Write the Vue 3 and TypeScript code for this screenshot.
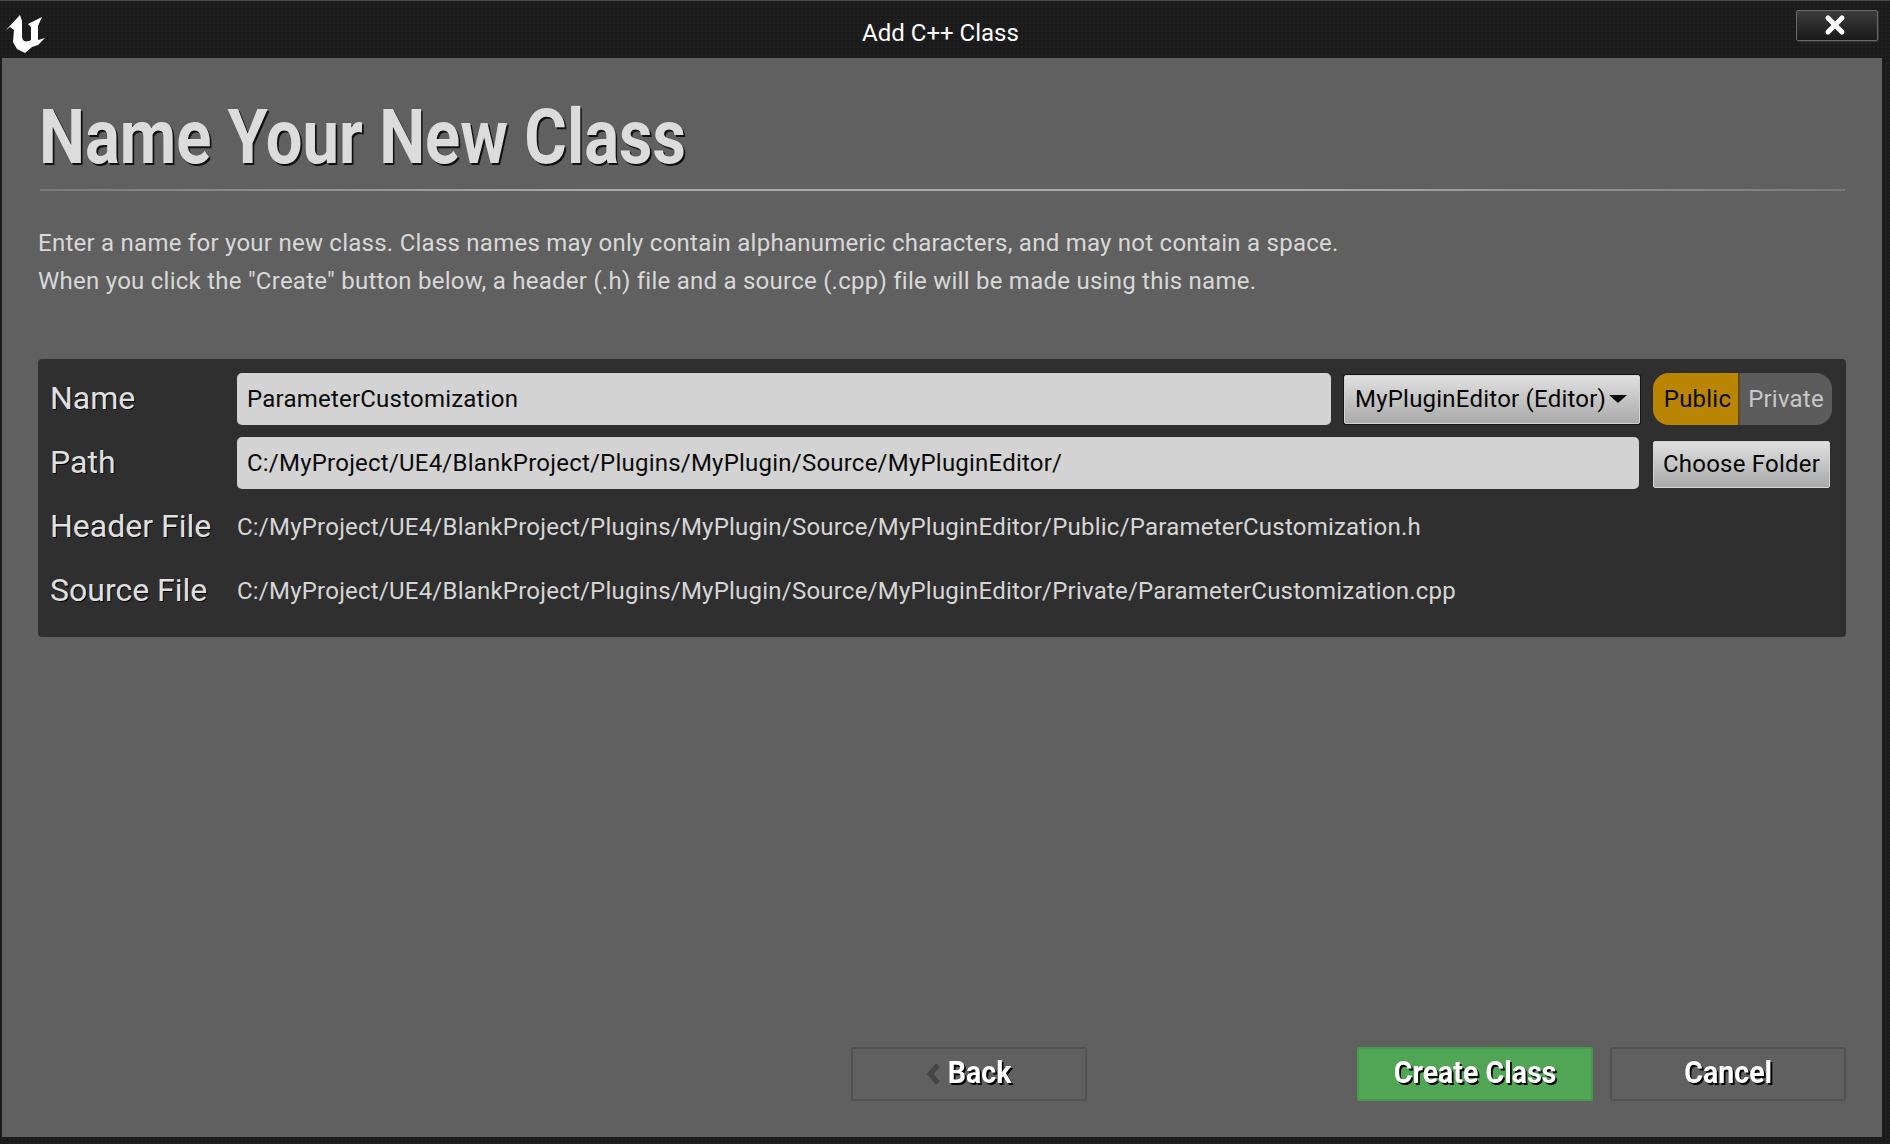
<script setup lang="ts">
interface Row {
  label: string
  value: string
}
const files: Row[] = [
  { label: 'Header File', value: 'C:/MyProject/UE4/BlankProject/Plugins/MyPlugin/Source/MyPluginEditor/Public/ParameterCustomization.h' },
  { label: 'Source File', value: 'C:/MyProject/UE4/BlankProject/Plugins/MyPlugin/Source/MyPluginEditor/Private/ParameterCustomization.cpp' }
]
</script>

<template>
  <div class="window">
    <header class="titlebar">
      <svg class="logo" viewBox="0 0 40 40" width="40" height="40" aria-hidden="true">
        <path d="M1 16 L15 1 L17 7 L17 22 C17 27 20 29 26 26 L26 13 L23 10 L37 3 L33 12 L33 26 L40 24 L33 31 L27 33 L20 39 L12 35 L8 28 L9 16 L5 13 Z" fill="#fff" />
      </svg>
      <span class="wintitle">Add C++ Class</span>
      <button class="close" type="button" aria-label="Close">
        <svg viewBox="0 0 24 24" width="24" height="24" aria-hidden="true">
          <path d="M5 5 L19 19 M19 5 L5 19" stroke="#fff" stroke-width="5" stroke-linecap="round" fill="none" />
        </svg>
      </button>
    </header>
    <main class="body">
      <h1 class="heading"><span>Name Your New Class</span></h1>
      <div class="rule"></div>
      <p class="desc">Enter a name for your new class. Class names may only contain alphanumeric characters, and may not contain a space.<br />When you click the "Create" button below, a header (.h) file and a source (.cpp) file will be made using this name.</p>
      <section class="panel">
        <div class="row">
          <span class="label">Name</span>
          <div class="field">ParameterCustomization</div>
          <div class="combo">
            <span>MyPluginEditor (Editor)</span>
            <i class="caret"></i>
          </div>
          <div class="toggle">
            <span class="opt on">Public</span>
            <span class="opt">Private</span>
          </div>
        </div>
        <div class="row">
          <span class="label">Path</span>
          <div class="field">C:/MyProject/UE4/BlankProject/Plugins/MyPlugin/Source/MyPluginEditor/</div>
          <div class="choose">Choose Folder</div>
        </div>
        <div v-for="f in files" :key="f.label" class="row">
          <span class="label">{{ f.label }}</span>
          <span class="value">{{ f.value }}</span>
        </div>
      </section>
      <footer class="actions">
        <button class="btn back" type="button"><span class="inner"><svg class="chev" viewBox="0 0 14 22" width="14" height="22" aria-hidden="true"><path d="M12 2 L4 11 L12 20" stroke="#454545" stroke-width="5" fill="none" /></svg><span class="btxt">Back</span></span></button>
        <button class="btn create" type="button"><span class="btxt">Create Class</span></button>
        <button class="btn cancel" type="button"><span class="btxt">Cancel</span></button>
      </footer>
    </main>
  </div>
</template>

<style scoped>
.window {
  width: 1890px;
  height: 1144px;
  background-color: #1b1b1b;
  background-image: radial-gradient(#202020 1px, transparent 1px);
  background-size: 4px 4px;
  display: flex;
  flex-direction: column;
  font-family: Roboto, "Liberation Sans", sans-serif;
  border-top: 1px solid #4a4a4a;
  box-sizing: border-box;
  overflow: hidden;
}
.titlebar {
  height: 57px;
  position: relative;
  display: flex;
  align-items: center;
  justify-content: center;
  flex: none;
}
.logo {
  position: absolute;
  left: 5px;
  top: 13px;
  filter: blur(0.6px);
}
.wintitle {
  color: #fff;
  font-size: 24px;
  line-height: 1;
  margin-right: 9px;
  margin-top: 7px;
}
.close {
  position: absolute;
  left: 1796px;
  top: 9px;
  width: 82px;
  height: 31px;
  padding: 0 4px 0 0;
  border: 1px solid #6a6a6a;
  border-radius: 2px;
  background: linear-gradient(#3c3c3c, #191919);
  box-shadow: 1px 1px 0 #333;
  display: flex;
  align-items: center;
  justify-content: center;
}
.close svg {
  margin-top: -2px;
}
.body {
  flex: 1;
  margin: 0 8px 7px 2px;
  background: #606060;
  padding: 0 36px 36px 36px;
  display: flex;
  flex-direction: column;
}
.heading {
  margin: 0 0 0 1px;
  height: 131px;
  display: flex;
  align-items: center;
  font-size: 76px;
  font-weight: 700;
  color: #dcdcdc;
  text-shadow: 2px 2px 0 #111;
  line-height: 1;
}
.heading span {
  display: inline-block;
  transform-origin: left center;
  transform: scaleX(0.857);
  white-space: nowrap;
  margin-top: 27px;
}
.rule {
  height: 2px;
  margin-left: 2px;
  margin-right: 1px;
  background: linear-gradient(90deg, #7a7a7a, #aaa 30%, #aaa 70%, #7a7a7a);
  flex: none;
}
.desc {
  margin: 33px 0 0;
  color: #d8d8d8;
  font-size: 24px;
  line-height: 38px;
  letter-spacing: 0.25px;
}
.panel {
  margin-top: 59px;
  background: #2f2f2f;
  border-radius: 4px;
  padding: 14px 14px 20px 12px;
  display: flex;
  flex-direction: column;
  gap: 12px;
}
.row {
  display: flex;
  align-items: center;
  height: 52px;
}
.label {
  width: 187px;
  flex: none;
  color: #e0e0e0;
  font-size: 32px;
  line-height: 38px;
  padding-bottom: 2px;
  text-shadow: 1px 1px 0 #000;
}
.field {
  flex: 1;
  height: 52px;
  box-sizing: border-box;
  background: #d3d3d3;
  border-radius: 5px;
  color: #0a0a0a;
  font-size: 24px;
  letter-spacing: 0.22px;
  line-height: 52px;
  padding-left: 10px;
}
.combo {
  margin-left: 13px;
  width: 296px;
  height: 49px;
  box-sizing: border-box;
  flex: none;
  display: flex;
  align-items: center;
  gap: 3px;
  padding: 0 0 0 10px;
  border: 1px solid #d2d2d2;
  border-radius: 2px;
  background: linear-gradient(#e0e0e0, #a9a9a9);
  box-shadow: 0 0 0 1px #151515;
  color: #050505;
  font-size: 24px;
  letter-spacing: 0.22px;
  white-space: nowrap;
}
.caret {
  width: 0;
  height: 0;
  border-left: 9px solid transparent;
  border-right: 9px solid transparent;
  border-top: 8px solid #0a0a0a;
}
.toggle {
  margin-left: 13px;
  width: 179px;
  height: 52px;
  flex: none;
  display: flex;
  border-radius: 16px;
  overflow: hidden;
  background: #5c5c5c;
}
.opt {
  font-size: 24px;
  letter-spacing: 0.22px;
  line-height: 52px;
  color: #c8c8c8;
  flex: 1;
  text-align: center;
}
.opt.on {
  flex: none;
  width: 87px;
  box-sizing: border-box;
  padding-left: 4px;
  background: #b98503;
  color: #0a0a0a;
  border-right: 2px solid #5f4a10;
}
.choose {
  margin: 2px 2px 0 14px;
  width: 177px;
  height: 47px;
  box-sizing: border-box;
  flex: none;
  display: flex;
  align-items: center;
  justify-content: center;
  border: 1px solid #d2d2d2;
  border-radius: 2px;
  background: linear-gradient(#e0e0e0, #a9a9a9);
  color: #050505;
  font-size: 24px;
  letter-spacing: 0.22px;
}
.value {
  color: #d6d6d6;
  font-size: 24px;
  letter-spacing: 0.22px;
  white-space: nowrap;
}
.actions {
  margin-top: auto;
  display: flex;
  gap: 17px;
  justify-content: flex-end;
}
.btn {
  width: 236px;
  height: 54px;
  box-sizing: border-box;
  padding: 0 0 4px;
  border: 2px solid #525252;
  border-radius: 2px;
  background: #606060;
  display: flex;
  align-items: center;
  justify-content: center;
  font-family: inherit;
}
.back {
  margin-right: 253px;
  padding-left: 4px;
}
.create {
  background: #50a654;
  border-color: #479a4b;
}
.inner {
  display: flex;
  align-items: center;
  gap: 3px;
}
.btxt {
  display: inline-block;
  color: #fff;
  font-size: 32px;
  font-weight: 700;
  line-height: 1;
  text-shadow: 2px 2px 0 #000;
  transform: scaleX(0.893);
  white-space: nowrap;
}
.chev {
  margin: 4px 1px 0 0;
}
</style>

<style>
html, body {
  margin: 0;
  background: #1b1b1b;
}
</style>
